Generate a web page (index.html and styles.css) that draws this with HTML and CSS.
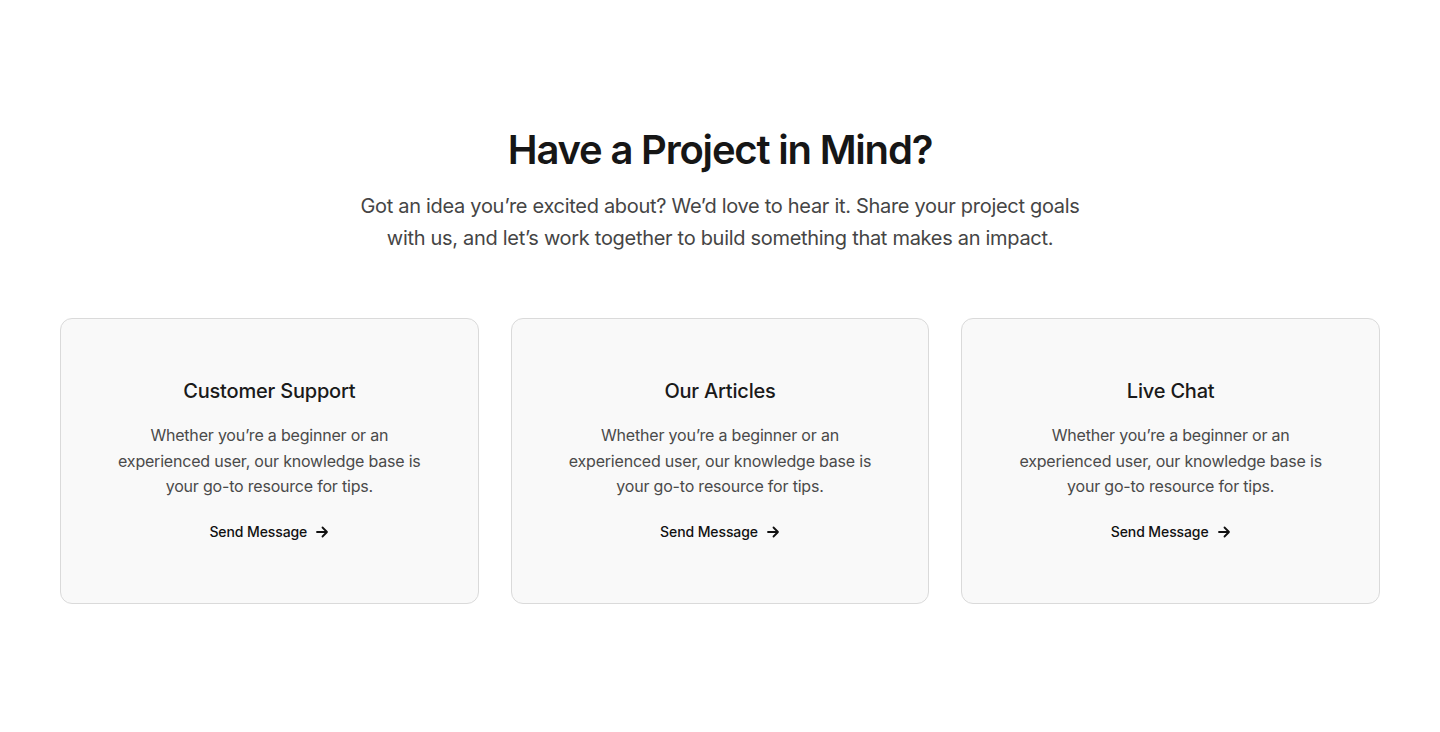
FILE: index.html
```html
<!DOCTYPE html>
<html lang="en">
<head>
<meta charset="utf-8">
<title>Have a Project in Mind?</title>
<link rel="stylesheet" href="styles.css">
</head>
<body>
<section class="contact">
  <header class="contact-head">
    <h1 class="contact-title">Have a Project in Mind?</h1>
    <p class="contact-lead">Got an idea you’re excited about? We’d love to hear it. Share your project goals with us, and let’s work together to build something that makes an impact.</p>
  </header>
  <div class="cards">
    <article class="card">
      <h2 class="card-title">Customer Support</h2>
      <p class="card-text">Whether you’re a beginner or an experienced user, our knowledge base is your go-to resource for tips.</p>
      <a class="card-link" href="#">Send Message <svg class="arrow" width="14" height="14" viewBox="0 0 14 14" fill="none" stroke="currentColor" stroke-width="1.8" stroke-linecap="round" stroke-linejoin="round"><path d="M2 7h10M7.5 2.5 12 7l-4.5 4.5"/></svg></a>
    </article>
    <article class="card">
      <h2 class="card-title">Our Articles</h2>
      <p class="card-text">Whether you’re a beginner or an experienced user, our knowledge base is your go-to resource for tips.</p>
      <a class="card-link" href="#">Send Message <svg class="arrow" width="14" height="14" viewBox="0 0 14 14" fill="none" stroke="currentColor" stroke-width="1.8" stroke-linecap="round" stroke-linejoin="round"><path d="M2 7h10M7.5 2.5 12 7l-4.5 4.5"/></svg></a>
    </article>
    <article class="card">
      <h2 class="card-title">Live Chat</h2>
      <p class="card-text">Whether you’re a beginner or an experienced user, our knowledge base is your go-to resource for tips.</p>
      <a class="card-link" href="#">Send Message <svg class="arrow" width="14" height="14" viewBox="0 0 14 14" fill="none" stroke="currentColor" stroke-width="1.8" stroke-linecap="round" stroke-linejoin="round"><path d="M2 7h10M7.5 2.5 12 7l-4.5 4.5"/></svg></a>
    </article>
  </div>
</section>
</body>
</html>
```
FILE: styles.css
```css
* { box-sizing: border-box; }
html, body { margin: 0; padding: 0; background: #fff; }
body {
  font-family: Inter, "Noto Sans", "Liberation Sans", sans-serif;
  color: #1a1a1a;
}
.contact {
  padding: 126px 60px 0;
}
.contact-head {
  display: flex;
  flex-direction: column;
  align-items: center;
  text-align: center;
}
.contact-title {
  margin: 0;
  font-size: 40px;
  line-height: 48px;
  font-weight: 600;
  letter-spacing: -1.2px;
  color: #161616;
}
.contact-lead {
  margin: 16px 0 0;
  max-width: 740px;
  font-size: 20px;
  line-height: 32px;
  font-weight: 400;
  letter-spacing: -0.3px;
  color: #454545;
}
.cards {
  margin-top: 64px;
  display: grid;
  grid-template-columns: repeat(3, 1fr);
  gap: 32px;
}
.card {
  height: 286px;
  padding: 58px 40px 0;
  border: 1px solid #dadada;
  border-radius: 12px;
  background: #f9f9f9;
  display: flex;
  flex-direction: column;
  align-items: center;
  text-align: center;
}
.card-title {
  margin: 0;
  font-size: 20px;
  line-height: 28px;
  font-weight: 500;
  letter-spacing: -0.2px;
  color: #1a1a1a;
}
.card-text {
  margin: 18px 0 0;
  max-width: 310px;
  font-size: 16px;
  line-height: 25.5px;
  letter-spacing: -0.2px;
  color: #4a4a4a;
}
.card-link {
  margin-top: 22px;
  display: inline-flex;
  align-items: center;
  gap: 8px;
  font-size: 14px;
  line-height: 20px;
  font-weight: 500;
  letter-spacing: -0.1px;
  color: #111;
  text-decoration: none;
}
.arrow { display: block; }
```
